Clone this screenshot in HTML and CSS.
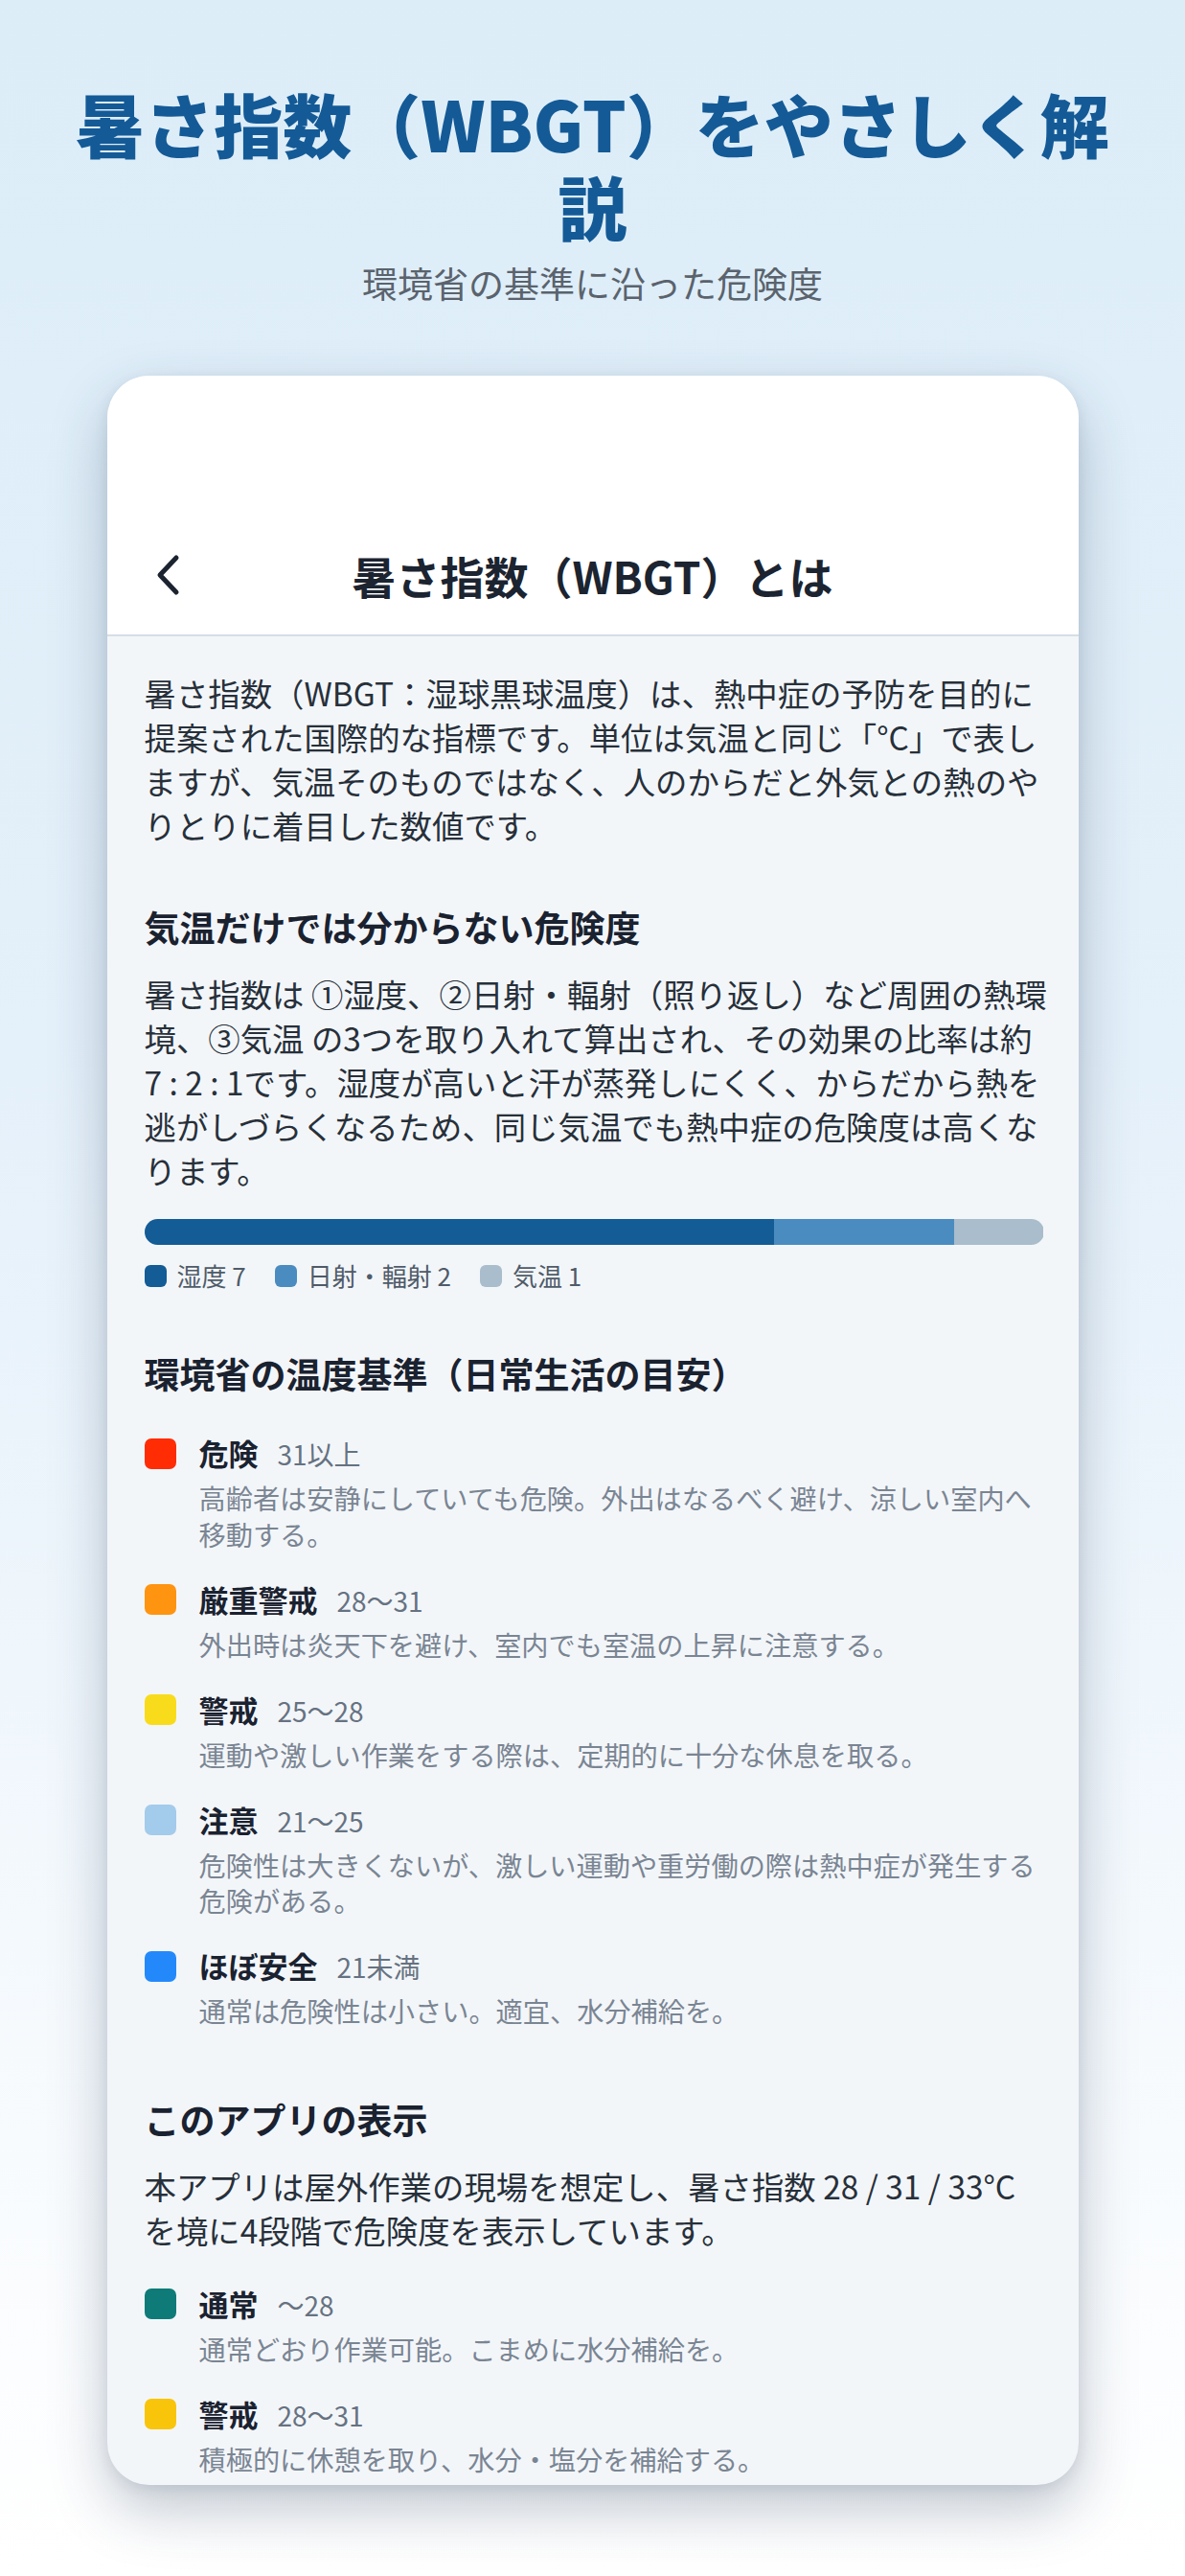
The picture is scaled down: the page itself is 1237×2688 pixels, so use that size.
FILE: index.html
```html
<!DOCTYPE html>
<html lang="ja">
<head>
<meta charset="utf-8">
<title>暑さ指数（WBGT）をやさしく解説</title>
<link rel="stylesheet" href="styles.css">
</head>
<body>
<main class="page">
  <h1 class="title">暑さ指数（WBGT）をやさしく解説</h1>
  <p class="subtitle">環境省の基準に沿った危険度</p>

  <section class="phone">
    <header class="nav">
      <div class="nav-row">
        <span class="back">
          <svg width="26" height="44" viewBox="0 0 26 44" aria-hidden="true"><path d="M22 4 L5 22 L22 40" fill="none" stroke="#1b2430" stroke-width="5" stroke-linecap="round" stroke-linejoin="round"/></svg>
        </span>
        <span class="nav-title">暑さ指数（WBGT）とは</span>
        <span></span>
      </div>
    </header>

    <div class="content">
      <p class="para para-first">暑さ指数（WBGT：湿球黒球温度）は、熱中症の予防を目的に提案された国際的な指標です。単位は気温と同じ「°C」で表しますが、気温そのものではなく、人のからだと外気との熱のやりとりに着目した数値です。</p>

      <h2 class="heading heading-a">気温だけでは分からない危険度</h2>
      <p class="para">暑さ指数は ①湿度、②日射・輻射（照り返し）など周囲の熱環境、③気温 の3つを取り入れて算出され、その効果の比率は約7 : 2 : 1です。湿度が高いと汗が蒸発しにくく、からだから熱を逃がしづらくなるため、同じ気温でも熱中症の危険度は高くなります。</p>

      <div class="ratio-bar">
        <span class="seg seg-hum" style="width:70%"></span>
        <span class="seg seg-rad" style="width:20%"></span>
        <span class="seg seg-air" style="width:10%"></span>
      </div>
      <ul class="legend">
        <li><span class="dot seg-hum"></span>湿度 7</li>
        <li><span class="dot seg-rad"></span>日射・輻射 2</li>
        <li><span class="dot seg-air"></span>気温 1</li>
      </ul>

      <h2 class="heading heading-b">環境省の温度基準（日常生活の目安）</h2>
      <ul class="levels levels-env">
        <li class="level">
          <span class="swatch c-danger"></span>
          <div class="level-head"><span class="level-name">危険</span><span class="level-range">31以上</span></div>
          <p class="level-desc">高齢者は安静にしていても危険。外出はなるべく避け、涼しい室内へ移動する。</p>
        </li>
        <li class="level">
          <span class="swatch c-severe"></span>
          <div class="level-head"><span class="level-name">厳重警戒</span><span class="level-range">28〜31</span></div>
          <p class="level-desc">外出時は炎天下を避け、室内でも室温の上昇に注意する。</p>
        </li>
        <li class="level">
          <span class="swatch c-warn"></span>
          <div class="level-head"><span class="level-name">警戒</span><span class="level-range">25〜28</span></div>
          <p class="level-desc">運動や激しい作業をする際は、定期的に十分な休息を取る。</p>
        </li>
        <li class="level">
          <span class="swatch c-caution"></span>
          <div class="level-head"><span class="level-name">注意</span><span class="level-range">21〜25</span></div>
          <p class="level-desc">危険性は大きくないが、激しい運動や重労働の際は熱中症が発生する危険がある。</p>
        </li>
        <li class="level">
          <span class="swatch c-safe"></span>
          <div class="level-head"><span class="level-name">ほぼ安全</span><span class="level-range">21未満</span></div>
          <p class="level-desc">通常は危険性は小さい。適宜、水分補給を。</p>
        </li>
      </ul>

      <h2 class="heading heading-c">このアプリの表示</h2>
      <p class="para">本アプリは屋外作業の現場を想定し、暑さ指数 28 / 31 / 33°C を境に4段階で危険度を表示しています。</p>

      <ul class="levels levels-app">
        <li class="level">
          <span class="swatch c-normal"></span>
          <div class="level-head"><span class="level-name">通常</span><span class="level-range">〜28</span></div>
          <p class="level-desc">通常どおり作業可能。こまめに水分補給を。</p>
        </li>
        <li class="level">
          <span class="swatch c-appwarn"></span>
          <div class="level-head"><span class="level-name">警戒</span><span class="level-range">28〜31</span></div>
          <p class="level-desc">積極的に休憩を取り、水分・塩分を補給する。</p>
        </li>
      </ul>
    </div>
  </section>
</main>
</body>
</html>
```

FILE: styles.css
```css
* { box-sizing: border-box; }

html, body {
  margin: 0;
  padding: 0;
}

body {
  font-family: "Noto Sans CJK JP", "Noto Sans", sans-serif;
  background: linear-gradient(180deg, #dcedf8 0%, #e4f0fa 40%, #f4f9fd 75%, #ffffff 100%);
  min-height: 2688px;
  color: #27303a;
}

.page {
  display: flex;
  flex-direction: column;
  align-items: center;
  padding-top: 85px;
  min-height: 2688px;
}

.title {
  margin: 0;
  max-width: 1100px;
  font-size: 72px;
  line-height: 86px;
  font-weight: 900;
  color: #145a96;
  text-align: center;
}

.subtitle {
  margin: 13px 0 0;
  font-size: 37px;
  line-height: 50px;
  color: #5a636d;
  text-align: center;
}

.phone {
  margin-top: 72px;
  width: 1014px;
  height: 2201px;
  border-radius: 44px;
  overflow: hidden;
  background: #f3f6f9;
  box-shadow: 0 26px 60px rgba(40, 60, 90, 0.28), 0 4px 14px rgba(40, 60, 90, 0.10);
  display: flex;
  flex-direction: column;
}

.nav {
  height: 272px;
  flex: none;
  background: #ffffff;
  border-bottom: 2px solid #d6dee6;
  display: flex;
  flex-direction: column;
  justify-content: flex-end;
  padding-bottom: 18px;
}

.nav-row {
  height: 88px;
  display: grid;
  grid-template-columns: 1fr auto 1fr;
  align-items: center;
}

.back {
  display: flex;
  align-items: center;
  padding-left: 50px;
  height: 44px;
}

.nav-title {
  font-size: 46px;
  font-weight: 600;
  color: #1b2430;
  line-height: 60px;
}

.content {
  padding: 36px 31px 0 39px;
}

.para {
  margin: 22px 0 0;
  font-size: 33.4px;
  line-height: 46px;
  color: #27303a;
}

.para-first {
  margin-top: 0;
}

.heading {
  margin: 58px 0 0;
  font-size: 37px;
  line-height: 50px;
  font-weight: 600;
  color: #1a2230;
}

.heading-b { margin-top: 60px; }
.heading-c { margin-top: 69px; }

.ratio-bar {
  margin-top: 28px;
  height: 27px;
  border-radius: 14px;
  overflow: hidden;
  display: flex;
  width: 939px;
}

.seg { display: block; height: 100%; }
.seg-hum { background: #135c96; }
.seg-rad { background: #4a8cc0; }
.seg-air { background: #a9bdcc; }

.legend {
  list-style: none;
  margin: 15px 0 0;
  padding: 0;
  display: flex;
  gap: 30px;
  font-size: 26px;
  line-height: 34px;
  color: #4f5b69;
}

.legend li {
  display: flex;
  align-items: center;
  gap: 11px;
}

.dot {
  display: block;
  width: 23px;
  height: 23px;
  border-radius: 6px;
}

.levels {
  list-style: none;
  margin: 37px 0 0;
  padding: 0;
  width: 939px;
  display: flex;
  flex-direction: column;
  gap: 28.5px;
}

.levels-app { margin-top: 33px; }

.level {
  display: grid;
  grid-template-columns: 33px 1fr;
  column-gap: 24px;
  align-items: center;
}

.swatch {
  grid-column: 1;
  grid-row: 1;
  width: 33px;
  height: 32px;
  border-radius: 7px;
}

.level-head {
  grid-column: 2;
  grid-row: 1;
  display: flex;
  align-items: baseline;
  gap: 20px;
  line-height: 42px;
}

.level-name {
  font-size: 31px;
  font-weight: 700;
  color: #1a2230;
}

.level-range {
  font-size: 28px;
  color: #667281;
}

.level-desc {
  grid-column: 2;
  grid-row: 2;
  margin: 6px 0 0;
  font-size: 28.2px;
  line-height: 37.5px;
  color: #7a8593;
}

.c-danger { background: #ff2c04; }
.c-severe { background: #ff9410; }
.c-warn { background: #f8dc1c; }
.c-caution { background: #a3cbeb; }
.c-safe { background: #2389fb; }
.c-normal { background: #0e7b79; }
.c-appwarn { background: #f9c50a; }
```
